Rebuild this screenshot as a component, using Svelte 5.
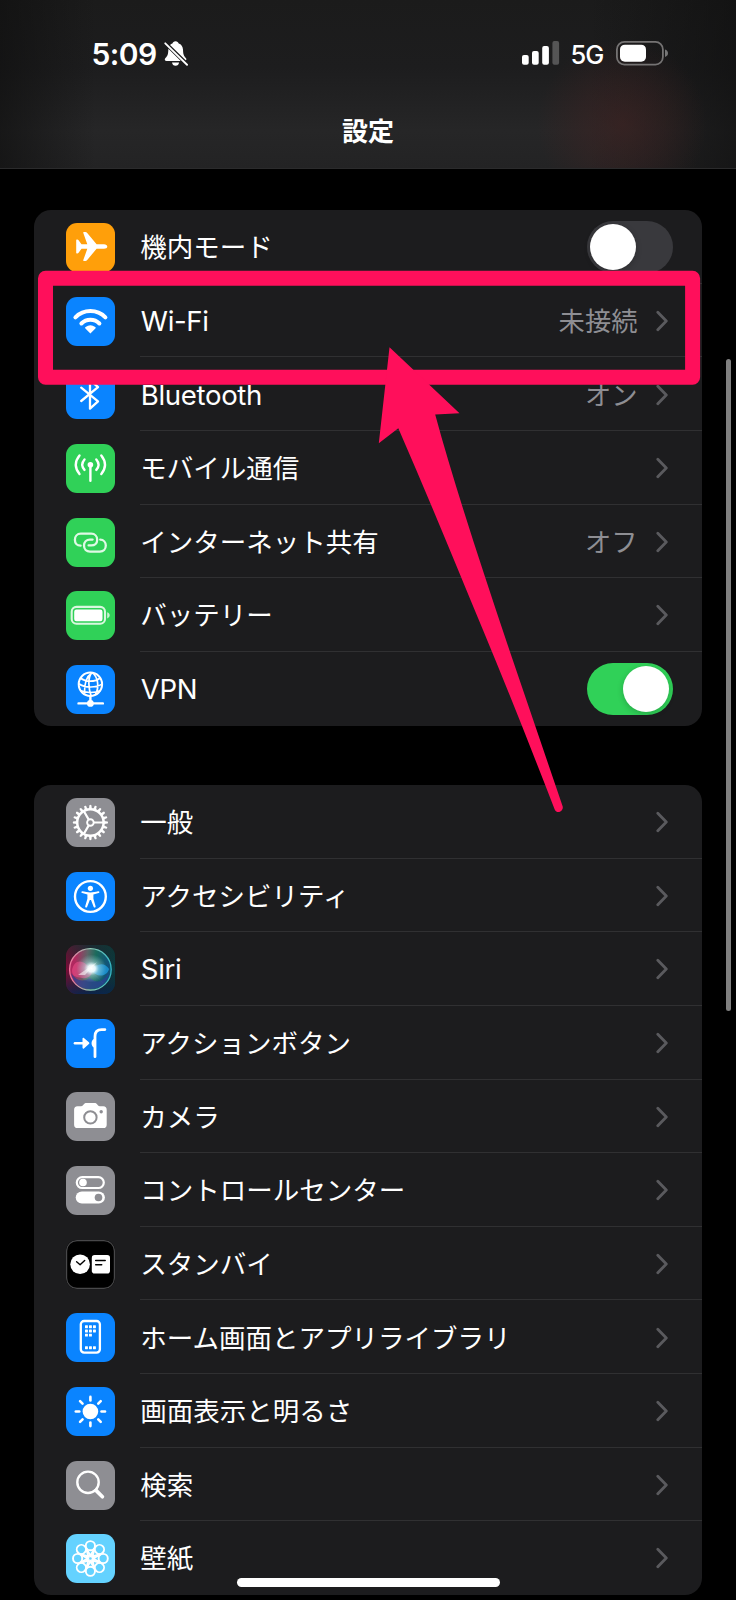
<script lang="ts">
  type Row = {
    label: string;
    icon: string;
    color: string;
    value?: string;
    toggle?: boolean;
    on?: boolean;
    latin?: boolean;
  };

  const blue = "#0a84ff";
  const green = "#30d158";
  const gray = "#8e8e93";

  let connections: Row[] = $state([
    { label: "機内モード", icon: "airplane", color: "#ff9f0a", toggle: true, on: false },
    { label: "Wi-Fi", icon: "wifi", color: blue, value: "未接続", latin: true },
    { label: "Bluetooth", icon: "bluetooth", color: blue, value: "オン", latin: true },
    { label: "モバイル通信", icon: "cellular", color: green },
    { label: "インターネット共有", icon: "hotspot", color: green, value: "オフ" },
    { label: "バッテリー", icon: "battery", color: green },
    { label: "VPN", icon: "vpn", color: blue, toggle: true, on: true, latin: true },
  ]);

  let system: Row[] = $state([
    { label: "一般", icon: "general", color: gray },
    { label: "アクセシビリティ", icon: "accessibility", color: blue },
    { label: "Siri", icon: "siri", color: "#101820", latin: true },
    { label: "アクションボタン", icon: "action", color: blue },
    { label: "カメラ", icon: "camera", color: gray },
    { label: "コントロールセンター", icon: "control", color: gray },
    { label: "スタンバイ", icon: "standby", color: "#000" },
    { label: "ホーム画面とアプリライブラリ", icon: "home", color: blue },
    { label: "画面表示と明るさ", icon: "display", color: blue },
    { label: "検索", icon: "search", color: gray },
    { label: "壁紙", icon: "wallpaper", color: "#64d2ff" },
  ]);

  const rotate = (n: number, shape: string) =>
    Array.from(
      { length: n },
      (_, i) => `<g transform="rotate(${(i * 360) / n} 24.4 24.5)">${shape}</g>`
    ).join("");

  const dots = [
    [19, 13.6], [23, 13.6], [27, 13.6],
    [19, 17.8], [23, 17.8], [27, 17.8],
    [19, 22], [23, 22],
    [19, 34.6], [23, 34.6], [27, 34.6],
  ]
    .map(([x, y]) => `<rect x="${x}" y="${y - 1.3}" width="2.9" height="2.9" rx=".4"/>`)
    .join("");

  // 49 x 49 glyphs, drawn white by default
  const glyphs: Record<string, string> = {
    airplane: `<path d="M38 21.2H30.6L21 9.8c-.4-.5-.9-.7-1.5-.7H17.800c-.5 0-.7.4-.5.8l4 11.300h-5.800l-3.100-4.100c-.3-.3-.6-.5-1-.5h-.6c-.4 0-.6.3-.6.7v12.400c0 .4.2.7.6.7h.6c.4 0 .7-.2 1-.5l3.100-4.100h5.800l-4 11.300c-.2.4 0 .8.5.8h1.700c.6 0 1.100-.2 1.500-.7l9.600-11.400H38c1.900 0 3.300-1 3.300-2.300S39.900 21.200 38 21.200z"/>`,
    wifi: `<g fill="none" stroke="#fff" stroke-width="4" stroke-linecap="round"><path d="M9.400 20.300A21.300 21.300 0 0 1 39.400 20.300"/><path d="M15.400 26.500A12.800 12.800 0 0 1 33.400 26.500"/></g><path d="M24.400 36.400l-5-4.800c-.5-.5-.4-1.100.2-1.500a8 8 0 0 1 9.600 0c.6.4.7 1 .2 1.500z"/>`,
    bluetooth: `<path d="M15.200 17.700L32 31.300 24 38.600V9.800L32 17.200 15.200 31" fill="none" stroke="#fff" stroke-width="2.300" stroke-linecap="round" stroke-linejoin="round"/>`,
    cellular: `<circle cx="24.400" cy="20.700" r="2.800"/><g fill="none" stroke="#fff" stroke-width="2.400" stroke-linecap="round"><path d="M24.400 21V36.800"/><path d="M18.500 15.500q-4.500 5.200 0 10.400M30.300 15.500q4.500 5.200 0 10.400M13.500 11.400q-7.400 9.300 0 18.600M35.300 11.400q7.400 9.300 0 18.600"/></g>`,
    hotspot: `<g fill="none" stroke="#dff9e5" stroke-width="2.300" stroke-linecap="round"><path d="M14.600 27.700C11 27.700 8.900 25 8.900 21.700c0-3.400 2.400-6 5.800-6h10.600c3.500 0 5.900 2.600 5.900 6s-2.400 5.700-5.900 5.700h-2.700"/><path d="M34.200 21.600c3.400.1 5.600 2.800 5.600 6 0 3.400-2.500 6-5.900 6H24c-3.600 0-6-2.600-6-6 0-3.300 2.400-6 5.900-6h2.700"/></g>`,
    battery: `<rect x="5.700" y="15.900" width="33.300" height="16.800" rx="4.800" fill="none" stroke="#d9f7df" stroke-width="2.100"/><rect x="8.200" y="18.500" width="28.300" height="11.700" rx="2.200"/><path d="M41.200 21.300v6.100c3.300-1 3.300-5.100 0-6.100z" fill="#c8f3d2"/>`,
    vpn: `<g fill="none" stroke="#fff" stroke-width="1.700"><circle cx="24.400" cy="19.300" r="11.700" stroke-width="2"/><path d="M26 7.600C21 11 18 16 18.600 28.400M26 7.600c-5 5-3 17-1 23M26 7.600c6 4 7.500 14 3.600 21.600M14.600 13.200c5 3.800 14 4.300 19.600-.2M12.800 18.700c6 4.300 17 4.300 23.200.4M14.300 25.600c5 2.600 15 2.500 20.300-.2"/><path d="M24.400 31v6M12.500 38.400h24.400" stroke-width="2.400" stroke-linecap="round"/></g><circle cx="24.400" cy="38.400" r="3.400"/>`,
    general: `<g fill="none" stroke="#fff"><circle cx="24.400" cy="24.500" r="13.200" stroke-width="2.500"/><circle cx="24.400" cy="24.500" r="3.300" stroke-width="1.900"/><path d="M28 24.500h9M22.600 21.400l-4.700-8.200M22.600 27.600l-4.700 8.200" stroke-width="2.200"/></g>${rotate(20, `<path d="M22.900 11.200l.5-4q1-.7 2 0l.5 4z"/>`)}`,
    accessibility: `<circle cx="24.400" cy="24.500" r="15.400" fill="none" stroke="#fff" stroke-width="2.400"/><circle cx="24.400" cy="16.300" r="2.600"/><path d="M16.700 19.200c2.500.7 5 1.200 7.700 1.200s5.200-.5 7.700-1.200c1.500-.3 1.800 1.400.5 1.800l-5.200 1.400v4.400l2.200 7.500c.3 1.300-1.400 1.800-1.900.6l-2.700-7h-1.200l-2.700 7c-.5 1.200-2.200.7-1.900-.6l2.200-7.500v-4.400L16.200 21c-1.300-.4-1-2.100.5-1.800z"/>`,
    siri: `<defs>
      <linearGradient id="siriL"><stop offset="0" stop-color="#7d0c38"/><stop offset=".5" stop-color="#222338"/><stop offset="1" stop-color="#0a3b40"/></linearGradient>
      <linearGradient id="siriV" x2="0" y2="1"><stop offset="0" stop-color="#14342c" stop-opacity=".5"/><stop offset=".5" stop-color="#112222" stop-opacity="0"/><stop offset="1" stop-color="#08244f" stop-opacity=".85"/></linearGradient>
      <linearGradient id="siriO" x1=".1" y1=".5" x2=".9" y2=".6"><stop offset="0" stop-color="#b0285f"/><stop offset=".35" stop-color="#5e6467"/><stop offset=".6" stop-color="#1b6b5c"/><stop offset="1" stop-color="#10537b"/></linearGradient>
      <linearGradient id="siriR"><stop offset="0" stop-color="#f0719b"/><stop offset=".5" stop-color="#91cbb4"/><stop offset="1" stop-color="#35b7c3"/></linearGradient>
      <radialGradient id="siriG"><stop offset="0" stop-color="#fff"/><stop offset=".25" stop-color="#f2fdff" stop-opacity=".95"/><stop offset=".5" stop-color="#c5ecf2" stop-opacity=".45"/><stop offset="1" stop-color="#a6dce8" stop-opacity="0"/></radialGradient></defs>
      <rect width="49" height="49" fill="url(#siriL)"/><rect width="49" height="49" fill="url(#siriV)"/>
      <circle cx="24.400" cy="24.400" r="20.800" fill="url(#siriO)" stroke="url(#siriR)" stroke-width="1.300"/>
      <path d="M5 28q8 12 19 5 10 9 19-5-4 16-19 16T5 28z" fill="#2c3f91" opacity=".75"/>
      <path d="M6 25c2-10 10-12 18-2 5 6-1 11-8 10S6 31 6 25z" fill="#ec4c88" opacity=".6"/>
      <path d="M25 25c6-7 14-8 18-1-2 8-12 9-18 1z" fill="#1b94d4" opacity=".85"/>
      <ellipse cx="25.500" cy="23.500" rx="15" ry="14" fill="url(#siriG)"/>
      <path d="M20 21l17 17-12-12zM12 30l19-13-12 13z" fill="#fff" opacity=".55"/>`,
    action: `<g fill="none" stroke="#fff" stroke-linecap="round"><path d="M8.900 24.200h9" stroke-width="2.500"/><path d="M29 37.700V17.300c0-4.400 2.400-6.700 6.700-6.700h3.200" stroke-width="2.800"/></g><path d="M16.500 19.600v9.200c0 .8.800 1.100 1.400.6l5-4.300c.6-.5.6-1.300 0-1.800l-5-4.300c-.6-.5-1.400-.2-1.400.6z"/><path d="M28.500 20h-.7c-3 1.300-3 7.300 0 8.500h.7z"/>`,
    camera: `<path d="M11.500 14.300h3.700c1 0 1.500-.5 2-1.200.8-1.500 1.800-2.100 3.400-2.100h7.700c1.600 0 2.600.6 3.400 2.100.4.700 1 1.200 2 1.200h3.600c2.200 0 3.400 1.200 3.400 3.400v15c0 2.200-1.200 3.400-3.400 3.400H11.500c-2.200 0-3.400-1.200-3.400-3.400v-15c0-2.200 1.200-3.400 3.400-3.400z"/><circle cx="24.400" cy="25.400" r="6.200" fill="none" stroke="#8e8e93" stroke-width="2"/><circle cx="35.200" cy="19.800" r="1.700" fill="#8e8e93"/>`,
    control: `<rect x="10.800" y="11.100" width="27" height="10.900" rx="5.450" fill="none" stroke="#fff" stroke-width="2.200"/><circle cx="17" cy="16.500" r="3.800"/><rect x="9.700" y="25.400" width="29.200" height="12.200" rx="6.100"/><circle cx="32.500" cy="31.500" r="3.800" fill="#8e8e93"/>`,
    standby: `<rect x=".6" y=".6" width="47.800" height="47.800" rx="10.400" fill="none" stroke="#48484a" stroke-width="1.200"/><circle cx="14.100" cy="24.200" r="9.800"/><path d="M10.600 21.800l3.500 3 4.600-4.400" fill="none" stroke="#000" stroke-width="1.400" stroke-linecap="round" stroke-linejoin="round"/><rect x="25.800" y="15.100" width="18.200" height="18.400" rx="2.800"/><path d="M29.700 20.500h9.500M29.700 24.700h6" stroke="#000" stroke-width="1.500" stroke-linecap="round"/>`,
    home: `<rect x="14.800" y="8" width="19.100" height="31.600" rx="3.300" fill="none" stroke="#fff" stroke-width="2.300"/>${dots}`,
    display: `<circle cx="24.400" cy="24.500" r="7.800"/>${rotate(8, `<path d="M24.400 9.900v3.500" stroke="#fff" stroke-width="2.600" stroke-linecap="round"/>`)}`,
    search: `<circle cx="22" cy="21.300" r="10.700" fill="none" stroke="#fff" stroke-width="2.400"/><path d="M30 29.400l6.400 6.400" stroke="#fff" stroke-width="3.700" stroke-linecap="round"/>`,
    wallpaper: `<g fill="none" stroke="#fff" stroke-width="1.900">${rotate(8, `<circle cx="24.400" cy="11.700" r="4.600"/><path d="M20.400 14.500l4 7.200 4-7.200"/>`)}<circle cx="24.400" cy="24.500" r="2.900"/></g>`,
  };
</script>

{#snippet row(item: Row)}
  <div class="row">
    <span class="tile" style="background-color: {item.color}">
      <svg viewBox="0 0 49 49" fill="#fff">{@html glyphs[item.icon]}</svg>
    </span>
    <div class="body">
      <span class="label" class:latin={item.latin}>{item.label}</span>
      {#if item.toggle}
        <button
          class="switch"
          class:on={item.on}
          role="switch"
          aria-checked={item.on}
          aria-label={item.label}
          onclick={() => (item.on = !item.on)}
        >
          <span class="knob"></span>
        </button>
      {:else}
        {#if item.value}
          <span class="value">{item.value}</span>
        {/if}
        <svg class="chevron" viewBox="0 0 12 22">
          <path d="M1.800 2.200L10.300 11 1.800 19.800" />
        </svg>
      {/if}
    </div>
  </div>
{/snippet}

<div class="screen">
  <header>
    <div class="status">
      <span class="time">5:09</span>
      <svg class="bell" viewBox="0 0 26 28" fill="#fff">
        <path d="M12.800 1.200c-1.700 0-2.900 1-3.200 2.400-.9.300-1.700.8-2.400 1.400l15.900 15.700c.9-.4 1-1.500.2-2.400-2.300-2.400-2.700-4-2.900-8.400-.2-3.400-1.800-5.500-4.400-6.300-.3-1.400-1.500-2.400-3.200-2.400z" />
        <path d="M5.500 8.800c-.2 5.400-.6 7-3 9.500-1.300 1.400-.7 3.100 1.200 3.100h14.400zM9.200 22.900h7.200c-.2 2-1.600 3.400-3.600 3.400s-3.400-1.400-3.600-3.400z" />
        <path d="M2.300 3.400l22.200 21.800" stroke="#fff" stroke-width="1.900" stroke-linecap="round" />
      </svg>
      <svg class="signal" viewBox="0 0 38 25" fill="#fff">
        <rect y="14" width="6.700" height="9.700" rx="2" />
        <rect x="10" y="10" width="6.700" height="13.700" rx="2" />
        <rect x="20.200" y="5" width="6.700" height="18.700" rx="2" />
        <rect x="30.400" width="6.700" height="23.700" rx="2" opacity=".25" />
      </svg>
      <span class="network">5G</span>
      <svg class="power" viewBox="0 0 53 25">
        <rect x=".9" y=".9" width="46" height="22.700" rx="7.500" fill="none" stroke="#757373" stroke-width="1.800" />
        <rect x="4" y="3.700" width="26" height="17" rx="4.800" fill="#fff" />
        <path d="M49 8.500v7.400c4-1 4-6.400 0-7.400z" fill="#777" />
      </svg>
    </div>
    <h1>設定</h1>
  </header>

  <main>
    <section class="card">
      {#each connections as item}
        {@render row(item)}
      {/each}
    </section>
    <section class="card">
      {#each system as item}
        {@render row(item)}
      {/each}
    </section>
  </main>

  <div class="scrollbar"></div>
  <div class="home-indicator"></div>

  <!-- callout over the Wi-Fi row -->
  <svg class="callout" viewBox="0 0 736 1600">
    <path d="M45.500 278.300H692.600V377.300H45.500z" />
    <path
      class="arrow"
      d="M389.500 347.300L459.500 413.200 435.200 414.600C454 484 481 565 507 643L562.700 806.500C563.700 811.500 557 814.500 554.700 809.500C532 751 508 690 483 630C454 560 427 494 398.300 428.200L378.800 443.200z"
    />
  </svg>
</div>

<style>
  :global(body) {
    background: #000;
  }
  .screen {
    position: relative;
    width: 736px;
    height: 1600px;
    overflow: hidden;
    background: #000;
    color: #fff;
    font-family: "Inter", "Noto Sans CJK JP", sans-serif;
  }
  header {
    box-sizing: border-box;
    height: 168.600px;
    padding-top: 32px;
    border-bottom: 1px solid #2b2b2c;
    background:
      radial-gradient(ellipse 85px 85px at 622px 124px, rgba(69, 35, 34, 0.55), rgba(69, 35, 34, 0.3) 50%, transparent),
      linear-gradient(90deg, rgba(15, 15, 15, 0.65), transparent 13%, transparent 80%, rgba(15, 15, 15, 0.65)),
      linear-gradient(#1b1b1b, #1d1d1e 40%, #262627 78%, #232324);
  }
  .status {
    display: flex;
    align-items: center;
    height: 42px;
    padding-left: 91.500px;
    padding-right: 67px;
  }
  .time {
    width: 71px;
    margin-top: 2px;
    font-size: 30px;
    font-weight: 600;
    letter-spacing: -0.6px;
    white-space: nowrap;
  }
  .bell {
    width: 25.500px;
    height: 27.500px;
    margin-top: 2px;
  }
  .signal {
    width: 38px;
    height: 25px;
    margin-left: auto;
  }
  .network {
    width: 34px;
    margin: 2px 11.500px 0 11px;
    font-size: 25.500px;
    font-weight: 500;
    letter-spacing: -1px;
  }
  .power {
    width: 53px;
    height: 25px;
  }
  h1 {
    margin: 36px 0 0;
    font-family: "Noto Sans CJK JP", sans-serif;
    font-size: 26px;
    font-weight: 700;
    line-height: 40px;
    text-align: center;
  }
  main {
    display: flex;
    flex-direction: column;
    gap: 59.500px;
    padding: 41.600px 34px 0;
  }
  .card {
    overflow: hidden;
    border-radius: 17px;
    background: #1c1c1e;
  }
  .row {
    display: flex;
    align-items: center;
    gap: 25px;
    height: 73.640px;
    padding-left: 32.300px;
  }
  .tile {
    flex: none;
    width: 49px;
    height: 49px;
    margin-top: 1.200px;
    overflow: hidden;
    border-radius: 11px;
  }
  .tile svg {
    display: block;
    width: 49px;
    height: 49px;
  }
  .body {
    box-sizing: border-box;
    display: flex;
    flex: 1;
    align-items: center;
    height: 100%;
    padding-top: 1.500px;
    padding-right: 34px;
    border-bottom: 1px solid #303032;
  }
  .row:last-child .body {
    border-bottom-color: transparent;
  }
  .label {
    flex: 1;
    margin-top: -3px;
    font-family: "Noto Sans CJK JP", sans-serif;
    font-size: 26.500px;
    white-space: nowrap;
  }
  .label.latin {
    margin-top: 0;
    padding-left: 0.500px;
    font-family: "Inter", sans-serif;
    font-size: 27.600px;
    letter-spacing: -0.350px;
  }
  .value {
    margin-top: -3px;
    margin-right: 18.500px;
    color: #8e8e93;
    font-family: "Noto Sans CJK JP", sans-serif;
    font-size: 26.300px;
  }
  .chevron {
    width: 12px;
    height: 22px;
    fill: none;
    stroke: #5a5a5e;
    stroke-width: 2.800;
    stroke-linecap: round;
    stroke-linejoin: round;
  }
  .switch {
    display: flex;
    align-items: center;
    width: 86px;
    height: 52px;
    margin-right: -4.500px;
    padding: 0 4px 0 3px;
    border: 0;
    border-radius: 26px;
    background: #39393d;
  }
  .switch.on {
    justify-content: flex-end;
    background: #30d158;
  }
  .knob {
    width: 46px;
    height: 46px;
    border-radius: 50%;
    background: #fff;
    box-shadow: 0 2px 6px rgba(0, 0, 0, 0.2);
  }
  .scrollbar {
    position: absolute;
    top: 359px;
    right: 5.500px;
    width: 5px;
    height: 652px;
    border-radius: 3px;
    background: #808080;
  }
  .home-indicator {
    position: absolute;
    bottom: 13px;
    left: 236.500px;
    width: 263.500px;
    height: 9px;
    border-radius: 5px;
    background: #fff;
  }
  .callout {
    position: absolute;
    top: 0;
    left: 0;
    width: 736px;
    height: 1600px;
    fill: none;
    stroke: #ff0f5b;
    stroke-width: 15;
    stroke-linejoin: round;
    pointer-events: none;
  }
  .callout .arrow {
    fill: #ff0f5b;
    stroke: none;
  }
</style>
